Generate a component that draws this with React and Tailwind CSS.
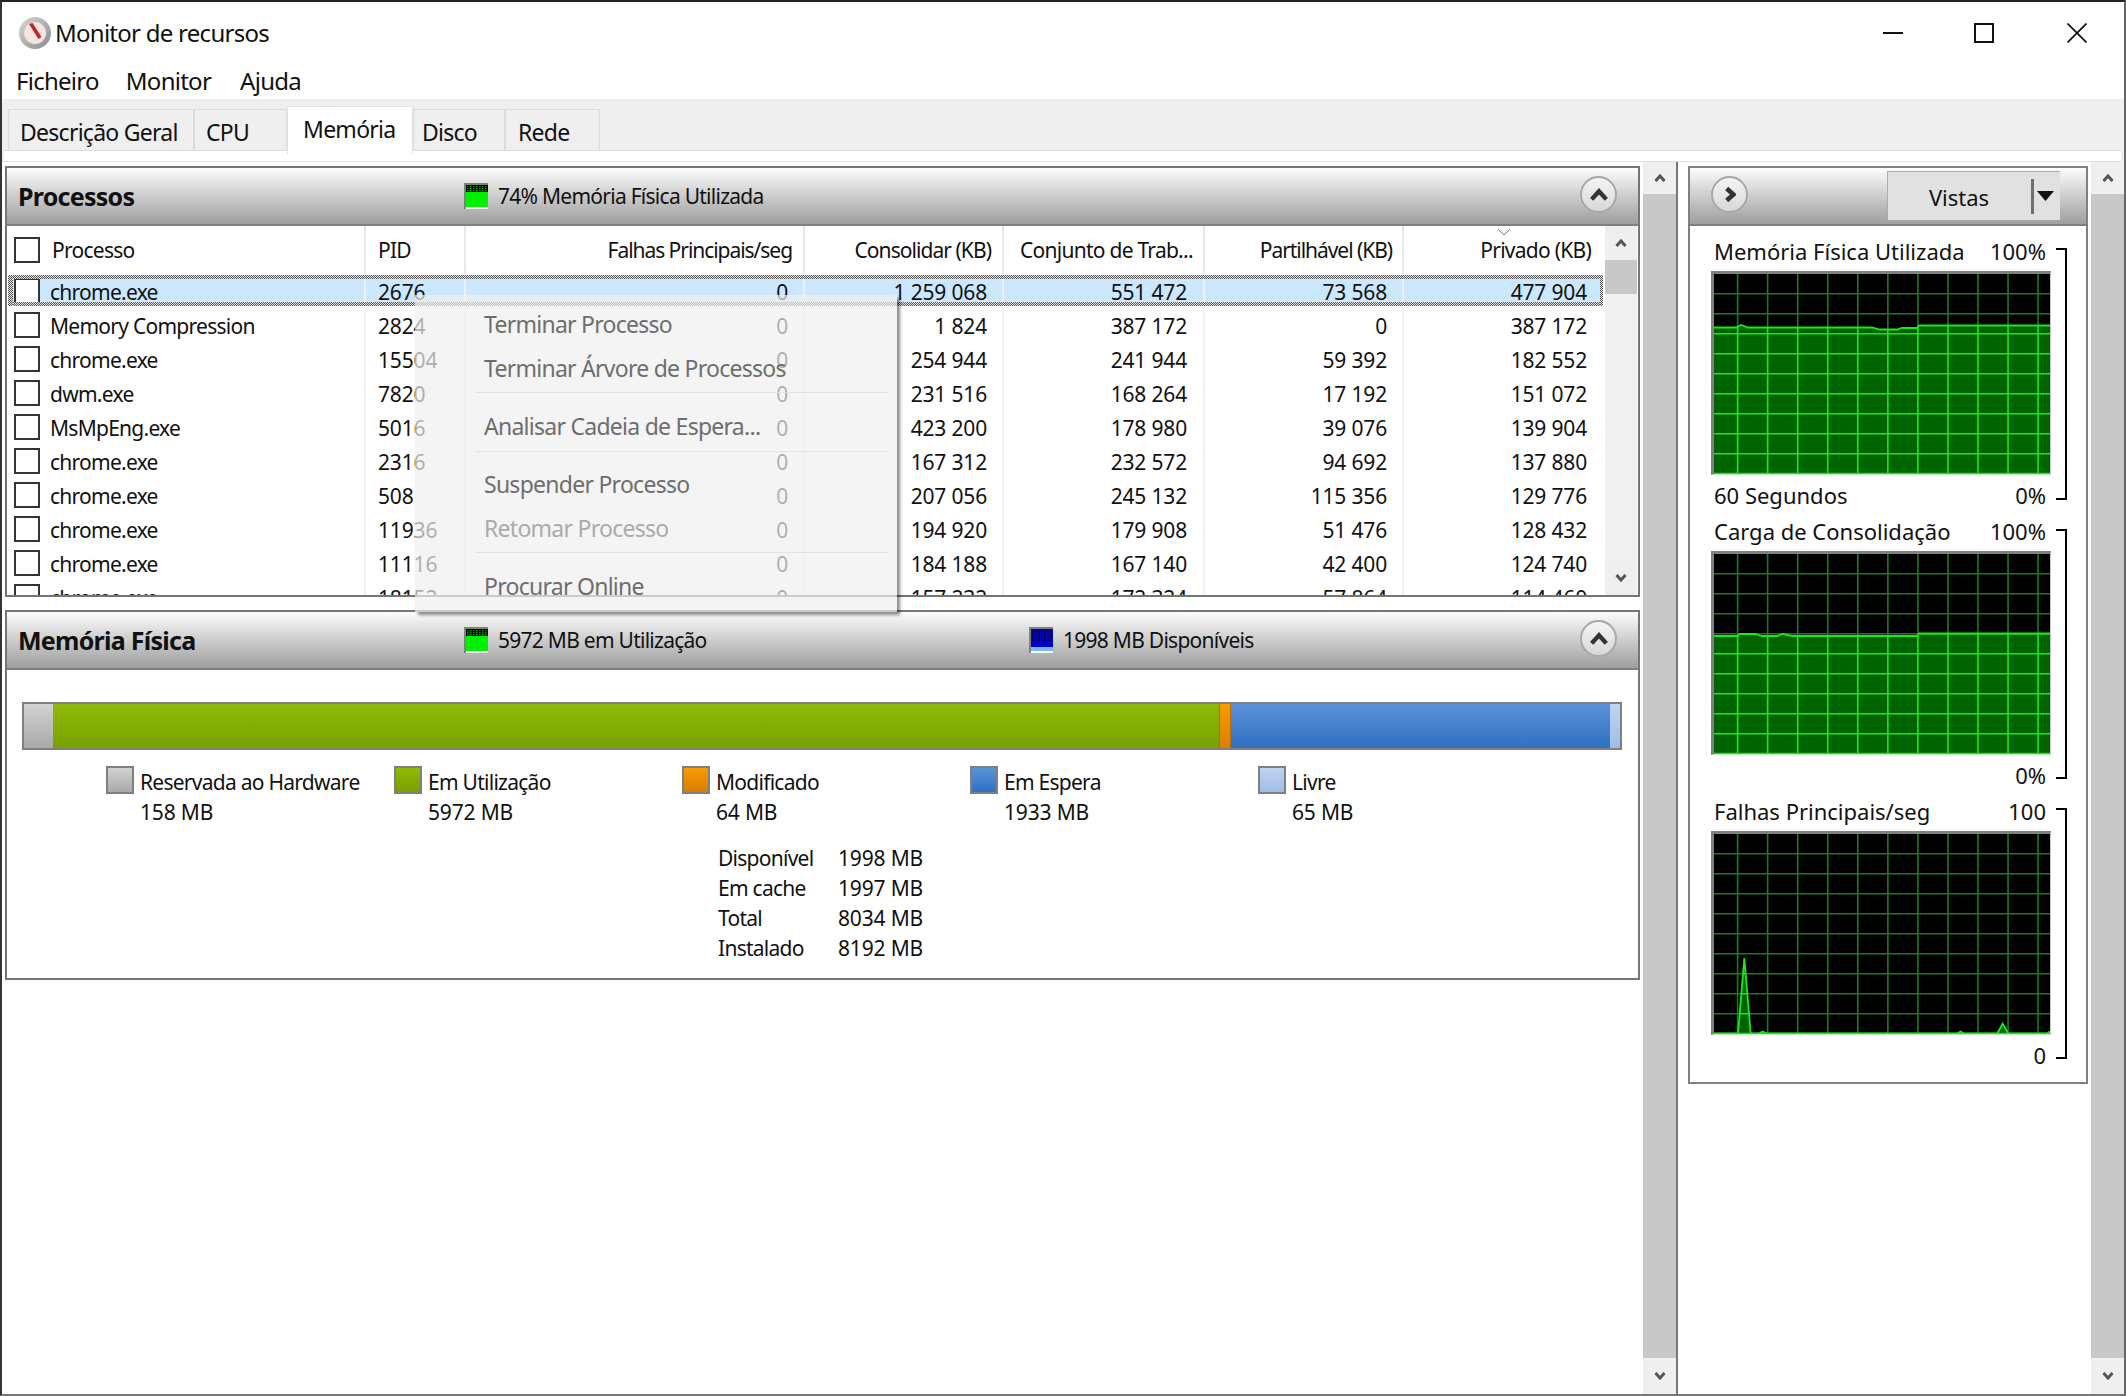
import React from "react";

const rows = [
  ["chrome.exe", "2676", "0", "1 259 068", "551 472", "73 568", "477 904"],
  ["Memory Compression", "2824", "0", "1 824", "387 172", "0", "387 172"],
  ["chrome.exe", "15504", "0", "254 944", "241 944", "59 392", "182 552"],
  ["dwm.exe", "7820", "0", "231 516", "168 264", "17 192", "151 072"],
  ["MsMpEng.exe", "5016", "0", "423 200", "178 980", "39 076", "139 904"],
  ["chrome.exe", "2316", "0", "167 312", "232 572", "94 692", "137 880"],
  ["chrome.exe", "508", "0", "207 056", "245 132", "115 356", "129 776"],
  ["chrome.exe", "11936", "0", "194 920", "179 908", "51 476", "128 432"],
  ["chrome.exe", "11116", "0", "184 188", "167 140", "42 400", "124 740"],
  ["chrome.exe", "18152", "0", "157 232", "172 324", "57 864", "114 460"],
];

const gridCols = "grid grid-cols-[359px_100px_339px_199px_201px_199px_201px]";

function Chevron({ dir = "up", className = "", color = "#555", w = 12, h = 8, sw = 3 }) {
  const d =
    dir === "up"
      ? "M1.5 7 L6 2 L10.5 7"
      : dir === "down"
      ? "M1.5 1 L6 6 L10.5 1"
      : "M2 1.5 L7 6 L2 10.5";
  const vb = dir === "right" ? "0 0 9 12" : "0 0 12 8";
  const vbW = dir === "right" ? 9 : 12;
  return (
    <svg width={w} height={h} viewBox={vb} className={className}>
      <path d={d} fill="none" stroke={color} strokeWidth={sw * (vbW / w)} />
    </svg>
  );
}

function RoundButton({ dir = "up" }) {
  return (
    <div className="flex h-[37px] w-[37px] items-center justify-center rounded-full border-2 border-[#a8a8a8] bg-gradient-to-b from-[#f4f4f4] to-[#d8d8d8]">
      {dir === "up" ? (
        <Chevron dir="up" w={20} h={13} sw={4.5} color="#333" />
      ) : (
        <Chevron dir="right" w={12} h={19} sw={4.5} color="#333" />
      )}
    </div>
  );
}

function StatusIcon({ blue }) {
  const dots = [];
  const rowsN = blue ? 6 : 3;
  for (let r = 0; r < rowsN; r++) {
    for (let c = 0; c < 7; c++) {
      dots.push(
        <rect key={r + "-" + c} x={3 + c * 3} y={3 + r * 2} width="1.5" height="1.2" fill={blue ? "#000050" : "#00a000"} />
      );
    }
  }
  return (
    <svg width="24" height="26" viewBox="0 0 24 26" className="shrink-0">
      <rect width="24" height="26" fill="#808080" />
      <rect x="2" y="2" width="22" height="24" fill="#fff" />
      {blue ? (
        <>
          <rect x="2" y="2" width="22" height="18" fill="#0000d0" />
          <rect x="2" y="20" width="22" height="4" fill="#7ab8ff" />
        </>
      ) : (
        <>
          <rect x="2" y="2" width="22" height="7" fill="#000" />
          <rect x="2" y="9" width="22" height="15" fill="#00f000" />
        </>
      )}
      {dots}
    </svg>
  );
}

function PanelHeader({ children, style = "h-[58px]" }) {
  return (
    <div className={"relative flex shrink-0 items-center border-b-2 border-[#808080] bg-gradient-to-b from-[#fdfdfd] to-[#9e9e9e] " + style}>
      {children}
    </div>
  );
}

function Scrollbar({ top = 34, bottom = 34, thumb, trackClass = "bg-[#c8c8c8]", className = "" }) {
  return (
    <div className={"flex shrink-0 flex-col " + trackClass + " " + className}>
      <div className="flex shrink-0 items-center justify-center bg-[#efefef]" style={{ height: top }}>
        <Chevron dir="up" />
      </div>
      {thumb ? <div className="h-[34px] shrink-0 bg-[#c8c8c8]" /> : null}
      <div className="flex-1" />
      <div className="flex shrink-0 items-center justify-center bg-[#efefef]" style={{ height: bottom }}>
        <Chevron dir="down" />
      </div>
    </div>
  );
}

function Cell({ right, pad, children, sep = "border-[#eef3fa]", className = "pt-[2px]" }) {
  return (
    <div
      className={"flex min-w-0 items-center whitespace-nowrap border-r-2 " + sep + " " + (right ? "justify-end " : "") + className}
      style={right ? { paddingRight: pad } : { paddingLeft: pad }}
    >
      {children}
    </div>
  );
}

function Box({ className = "-mt-[2px]" }) {
  return <div className={"h-[26px] w-[26px] shrink-0 border-2 border-[#333] bg-white " + className} />;
}

function Row({ r, selected }) {
  const dither = "absolute [background-image:repeating-conic-gradient(#555_0_25%,#e8e8e8_0_50%)] [background-size:2px_2px]";
  const num = "pt-[3px] tracking-[-0.008em]";
  return (
    <div className="relative h-[34px]">
      {selected ? <div className="absolute bottom-[2px] left-[1px] right-[2px] top-[1px] bg-[#cce8ff]" /> : null}
      <div className={"relative h-full " + gridCols}>
        <Cell pad={7} className="pt-[3px]">
          <Box className="-mt-[3px]" />
          <span className="ml-[10px]">{r[0]}</span>
        </Cell>
        <Cell pad={12} className={num}>{r[1]}</Cell>
        <Cell right pad={15} className={num}>{r[2]}</Cell>
        <Cell right pad={15} className={num}>{r[3]}</Cell>
        <Cell right pad={16} className={num}>{r[4]}</Cell>
        <Cell right pad={15} className={num}>{r[5]}</Cell>
        <Cell right pad={16} sep="border-transparent" className={num}>{r[6]}</Cell>
      </div>
      {selected ? (
        <>
          <div className={dither + " left-[1px] right-[2px] top-[1px] h-[4px]"} />
          <div className={dither + " bottom-[2px] left-[1px] right-[2px] h-[4px]"} />
          <div className={dither + " bottom-[2px] left-[1px] top-[1px] w-[5px]"} />
          <div className={dither + " bottom-[2px] right-[2px] top-[1px] w-[3px]"} />
        </>
      ) : null}
    </div>
  );
}

function MenuItem({ children, muted, className = "" }) {
  return (
    <div className={"flex h-[44px] items-center pl-[69px] pt-[1px] text-[23px] whitespace-nowrap " + (muted ? "text-[#ababab] " : "text-[#6e6e6e] ") + className}>
      {children}
    </div>
  );
}

function MenuSep({ className = "" }) {
  return <div className={"ml-[61px] mr-[8px] h-px bg-[#e2e2e2] " + className} />;
}

function ContextMenu() {
  return (
    <div className="absolute left-[408px] top-[127px] z-20 h-[317px] w-[482px] bg-[#f0f0f0]/70 pt-[7px] shadow-[3px_3px_3px_rgba(0,0,0,0.45)]">
      <MenuItem>Terminar Processo</MenuItem>
      <MenuItem>Terminar Árvore de Processos</MenuItem>
      <MenuSep className="mt-[2px]" />
      <MenuItem className="mt-[11px]">Analisar Cadeia de Espera...</MenuItem>
      <MenuSep className="mt-[3px]" />
      <MenuItem className="mt-[10px]">Suspender Processo</MenuItem>
      <MenuItem muted>Retomar Processo</MenuItem>
      <MenuSep className="mt-[2px]" />
      <MenuItem className="mt-[11px]">Procurar Online</MenuItem>
    </div>
  );
}

function ProcessPanel() {
  return (
    <div className="relative z-10 flex h-[431px] w-[1635px] flex-col border-2 border-[#757575] bg-white">
      <PanelHeader>
        <span className="ml-[11px] w-[446px] pt-[2px] text-[25px] font-bold text-[#111]">Processos</span>
        <StatusIcon />
        <span className="ml-[10px] pt-[2px]">74% Memória Física Utilizada</span>
        <div className="absolute right-[21px] top-[8px]">
          <RoundButton />
        </div>
      </PanelHeader>
      <div className="flex min-h-0 flex-1">
        <div className="flex min-h-0 w-[1598px] flex-col">
          <div className={"relative h-[48px] shrink-0 " + gridCols}>
            <Cell pad={7} sep="border-[#e8e8e8]">
              <Box />
              <span className="ml-[12px]">Processo</span>
            </Cell>
            <Cell pad={12} sep="border-[#e8e8e8]">PID</Cell>
            <Cell right pad={11} sep="border-[#e8e8e8]" className="pt-[2px] tracking-[-0.05em]">Falhas Principais/seg</Cell>
            <Cell right pad={11} sep="border-[#e8e8e8]" className="pt-[2px] tracking-[-0.045em]">Consolidar (KB)</Cell>
            <Cell pad={16} sep="border-[#e8e8e8]">Conjunto de Trab...</Cell>
            <Cell right pad={10} sep="border-[#e8e8e8]" className="pt-[2px] tracking-[-0.05em]">Partilhável (KB)</Cell>
            <Cell right pad={12} sep="border-transparent">Privado (KB)</Cell>
            <svg width="14" height="8" viewBox="0 0 14 8" className="absolute left-[1490px] top-[2px]">
              <path d="M1 1 L7 7 L13 1" fill="none" stroke="#777" strokeWidth="1" />
            </svg>
          </div>
          <div className="min-h-0 flex-1 overflow-hidden">
            {rows.map((r, i) => (
              <Row key={i} r={r} selected={i === 0} />
            ))}
          </div>
        </div>
        <Scrollbar top={34} bottom={34} thumb trackClass="bg-[#f0f0f0]" className="w-[32px]" />
      </div>
      <ContextMenu />
    </div>
  );
}

function LegendItem({ color, label, value }) {
  return (
    <div className="flex w-[288px] gap-[6px]">
      <div className={"h-[28px] w-[28px] shrink-0 border-2 border-[#808080] bg-gradient-to-b " + color} />
      <div className="mt-[2px] leading-[29px]">
        <div>{label}</div>
        <div className="mt-[1px] tracking-[-0.008em]">{value}</div>
      </div>
    </div>
  );
}

function MemoryPanel() {
  const val = "tracking-[-0.008em]";
  return (
    <div className="mt-[13px] flex h-[370px] w-[1635px] flex-col border-2 border-[#757575] bg-white">
      <PanelHeader>
        <span className="ml-[11px] w-[446px] pt-[2px] text-[25px] font-bold text-[#111]">Memória Física</span>
        <StatusIcon />
        <span className="ml-[10px] w-[531px] pt-[2px]">5972 MB em Utilização</span>
        <StatusIcon blue />
        <span className="ml-[10px] pt-[2px]">1998 MB Disponíveis</span>
        <div className="absolute right-[21px] top-[8px]">
          <RoundButton />
        </div>
      </PanelHeader>
      <div className="pl-[15px] pt-[32px]">
        <div className="flex h-[48px] w-[1600px] border-2 border-[#808080]">
          <div className="w-[29px] bg-gradient-to-b from-[#d2d2d2] to-[#a9a9a9]" />
          <div className="w-[1166px] bg-gradient-to-b from-[#8fba08] to-[#79a000]" />
          <div className="w-[12px] border-x border-[#c06a00] bg-gradient-to-b from-[#f89c00] to-[#d97f00]" />
          <div className="w-[379px] bg-gradient-to-b from-[#5a92d8] to-[#2f70c2]" />
          <div className="w-[10px] bg-gradient-to-b from-[#bfd5ef] to-[#9fbde6]" />
        </div>
        <div className="ml-[84px] mt-[16px] flex">
          <LegendItem color="from-[#d2d2d2] to-[#a9a9a9]" label="Reservada ao Hardware" value="158 MB" />
          <LegendItem color="from-[#8fba08] to-[#79a000]" label="Em Utilização" value="5972 MB" />
          <LegendItem color="from-[#f89c00] to-[#d97f00]" label="Modificado" value="64 MB" />
          <LegendItem color="from-[#5a92d8] to-[#2f70c2]" label="Em Espera" value="1933 MB" />
          <LegendItem color="from-[#bfd5ef] to-[#9fbde6]" label="Livre" value="65 MB" />
        </div>
        <div className="ml-[696px] mt-[16px] grid grid-cols-[120px_auto] leading-[30px]">
          <div>Disponível</div>
          <div className={val}>1998 MB</div>
          <div>Em cache</div>
          <div className={val}>1997 MB</div>
          <div>Total</div>
          <div className={val}>8034 MB</div>
          <div>Instalado</div>
          <div className={val}>8192 MB</div>
        </div>
      </div>
    </div>
  );
}

function Graph({ id, points }) {
  const W = 336;
  const H = 200;
  const poly = points.map((p) => p.join(",")).join(" ");
  const area = `0,${H} ${poly} ${W},${H}`;
  const v = [];
  for (let k = 0; k < 11; k++) v.push(23.6 + 30.05 * k);
  const hs = [];
  for (let k = 0; k < 10; k++) hs.push(19.7 + 20 * k);
  const grid = (color) => (
    <g stroke={color} strokeWidth="1.6">
      {v.map((x, i) => (
        <line key={"v" + i} x1={x} x2={x} y1={0} y2={H} />
      ))}
      {hs.map((y, i) => (
        <line key={"h" + i} x1={0} x2={W} y1={y} y2={y} />
      ))}
    </g>
  );
  return (
    <div className="border-b border-l-[3px] border-r border-t-[3px] border-b-[#bfe8bf] border-l-[#808080] border-r-[#c8c8c8] border-t-[#808080] bg-black">
      <svg width={W} height={H} viewBox={`0 0 ${W} ${H}`} className="block">
        <defs>
          <clipPath id={id}>
            <polygon points={area} />
          </clipPath>
        </defs>
        {grid("#1f7a1f")}
        <polygon points={area} fill="#006400" />
        <g clipPath={`url(#${id})`}>{grid("#1ee61e")}</g>
        <polyline points={poly} fill="none" stroke="#1ee61e" strokeWidth="1.8" />
        <line x1="0" x2={W} y1={H - 0.5} y2={H - 0.5} stroke="#1ee61e" strokeWidth="1.4" />
      </svg>
    </div>
  );
}

function Section({ label, max, min, foot, bracketTop, bracketH, graph }) {
  return (
    <div className="flex pl-[21px]">
      <div className="w-[340px]">
        <div className="flex h-[35px] items-center justify-between pb-[4px] pl-[3px] pr-[5px]">
          <span>{label}</span>
          <span>{max}</span>
        </div>
        <Graph {...graph} />
        <div className="flex h-[41px] items-center justify-between pl-[3px] pr-[5px]">
          <span>{foot}</span>
          <span>{min}</span>
        </div>
      </div>
      <div
        className="ml-[5px] w-[11px] border-b-2 border-r-2 border-t-2 border-black"
        style={{ marginTop: bracketTop, height: bracketH }}
      />
    </div>
  );
}

function RightPanel() {
  return (
    <div className="flex h-[918px] w-[400px] flex-col border-2 border-[#808080] bg-white text-[22px] tracking-normal">
      <PanelHeader>
        <div className="absolute left-[21px] top-[8px]">
          <RoundButton dir="right" />
        </div>
        <div className="absolute left-[197px] top-[3px] flex h-[49px] w-[173px] items-center border border-b-0 border-r-0 border-[#adadad] bg-[#e1e1e1]">
          <span className="w-[142px] pt-[2px] text-center">Vistas</span>
          <div className="ml-[1px] h-[35px] w-[3px] bg-[#707070]" />
          <svg width="17" height="10" viewBox="0 0 17 10" className="ml-[3px]">
            <path d="M0 0 H17 L8.5 10 Z" fill="#111" />
          </svg>
        </div>
      </PanelHeader>
      <div className="pt-[10px]">
        <Section
          label="Memória Física Utilizada"
          max="100%"
          min="0%"
          foot="60 Segundos"
          bracketTop={12}
          bracketH={252}
          graph={{
            id: "g1",
            points: [[0, 53.5], [22, 53.5], [27, 51], [34, 53.5], [158, 53.5], [166, 55.5], [183, 55.5], [188, 54], [203, 54], [205, 51.5], [336, 51.5]],
          }}
        />
        <Section
          label="Carga de Consolidação"
          max="100%"
          min="0%"
          foot=""
          bracketTop={13}
          bracketH={250}
          graph={{
            id: "g2",
            points: [[0, 82], [23, 82], [26, 80], [41, 80], [48, 82], [63, 82], [69, 80], [78, 82], [203, 82], [205, 79.5], [336, 79.5]],
          }}
        />
        <Section
          label="Falhas Principais/seg"
          max="100"
          min="0"
          foot=""
          bracketTop={12}
          bracketH={251}
          graph={{
            id: "g3",
            points: [[0, 199.5], [24, 199.5], [30.3, 124], [36.7, 199.5], [45, 199.5], [48.5, 197.5], [52.7, 199.5], [243, 199.5], [246.7, 197.5], [250, 199.5], [283.3, 199.5], [288.7, 189.7], [294.3, 199.5], [332.7, 199.5], [336, 197.5]],
          }}
        />
      </div>
    </div>
  );
}

function Tab({ w, pl, active, children }) {
  return active ? (
    <div className="relative z-10 -mb-[4px] flex h-[48px] items-start bg-white pt-[5px] border-x border-t border-[#e4e4e4]" style={{ width: w, paddingLeft: pl }}>
      {children}
    </div>
  ) : (
    <div className="flex h-[41px] items-center border border-b-0 border-[#dcdcdc] pt-[4px]" style={{ width: w, paddingLeft: pl }}>
      {children}
    </div>
  );
}

export default function App() {
  return (
    <div className="flex h-[1396px] w-[2126px] flex-col overflow-hidden border-b-2 border-l-2 border-r-2 border-t-2 border-b-[#777] border-l-[#333] border-r-[#666] border-t-[#222] bg-white font-['Noto_Sans',sans-serif] text-[21px] tracking-[-0.035em] text-[#111]">
      <div className="flex h-[62px] shrink-0 items-center pl-[16px]">
        <svg width="34" height="34" viewBox="0 0 34 34" className="shrink-0">
          <defs>
            <linearGradient id="ring" x1="0" y1="0" x2="1" y2="1">
              <stop offset="0" stopColor="#d8d8d8" />
              <stop offset="1" stopColor="#8a8a8a" />
            </linearGradient>
          </defs>
          <circle cx="17" cy="17" r="16" fill="url(#ring)" />
          <circle cx="17" cy="17" r="11" fill="#f2e4e0" />
          <path d="M11 8 L14.5 7 L23.5 21 L20.5 23 Z" fill="#c8202a" />
        </svg>
        <span className="ml-[3px] text-[24px]">Monitor de recursos</span>
        <div className="flex-1" />
        <svg width="20" height="20" viewBox="0 0 20 20" className="mr-[71px]">
          <rect x="0" y="9" width="20" height="2" fill="#111" />
        </svg>
        <svg width="20" height="20" viewBox="0 0 20 20" className="mr-[73px]">
          <rect x="1" y="1" width="18" height="18" fill="none" stroke="#111" strokeWidth="2" />
        </svg>
        <svg width="20" height="20" viewBox="0 0 20 20" className="mr-[37px]">
          <path d="M0.5 0.5 L19.5 19.5 M19.5 0.5 L0.5 19.5" stroke="#111" strokeWidth="1.7" />
        </svg>
      </div>
      <div className="flex h-[35px] shrink-0 items-center gap-[27px] pb-[2px] pl-[14px] text-[24px]">
        <span>Ficheiro</span>
        <span>Monitor</span>
        <span className="ml-[2px]">Ajuda</span>
      </div>
      <div className="shrink-0 bg-[#efefef] pl-[2px] pr-[3px]">
        <div className="flex h-[51px] items-end pl-[4px] text-[23px] tracking-[-0.032em]">
          <Tab w={186} pl={11}>Descrição Geral</Tab>
          <Tab w={93} pl={11}>CPU</Tab>
          <Tab w={126} pl={15} active>Memória</Tab>
          <Tab w={92} pl={8}>Disco</Tab>
          <Tab w={95} pl={12}>Rede</Tab>
        </div>
        <div className="h-[12px] border-b border-t border-[#dddddd] bg-white" />
      </div>
      <div className="flex min-h-0 flex-1">
        <div className="w-[1641px] shrink-0 pl-[3px] pt-[4px]">
          <ProcessPanel />
          <MemoryPanel />
        </div>
        <Scrollbar top={32} bottom={36} className="w-[33px]" />
        <div className="w-[2px] shrink-0 bg-[#777]" />
        <div className="w-[413px] shrink-0 pl-[10px] pt-[4px]">
          <RightPanel />
        </div>
        <Scrollbar top={32} bottom={36} className="w-[33px]" />
      </div>
    </div>
  );
}
